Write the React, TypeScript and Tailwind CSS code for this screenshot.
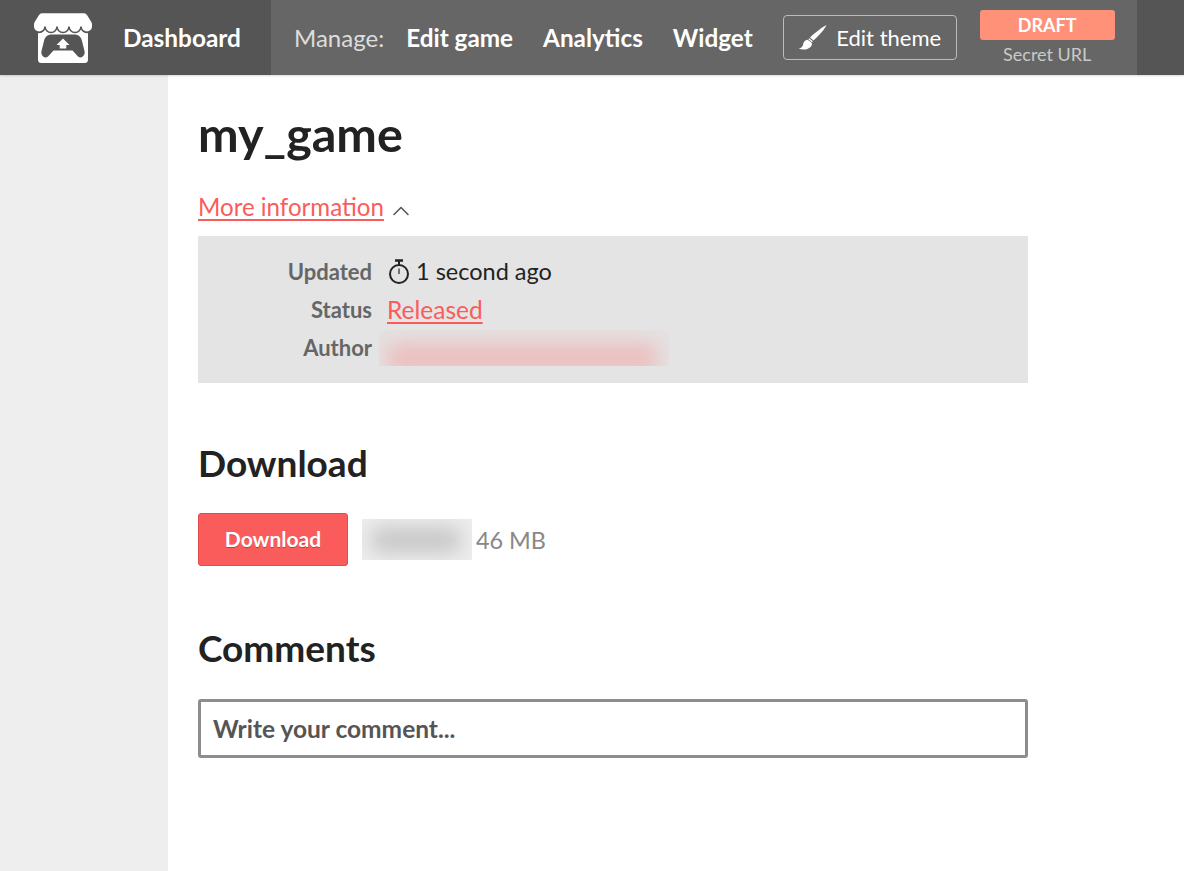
import { ChevronUp } from "lucide-react";

const font = "font-['Lato','Liberation_Sans',sans-serif]";

function Logo() {
  return (
    <svg width="60" height="52" viewBox="0 0 60 52" className="block">
      {/* body */}
      <path fill="#fff" d="M5 14H55V47.500A3.500 3.500 0 0 1 51.500 51H8.500A3.500 3.500 0 0 1 5 47.500Z" />
      {/* awning, its dark outline cuts the scallops out of the body */}
      <path
        fill="#fff"
        stroke="#555"
        strokeWidth="1.600"
        d="M9 0.500H51C53 0.500 54 1.500 55 3L59 9.500C59.500 10.500 59.800 11.500 59.800 12.500V14.500A5.900 5.900 0 0 1 48 14.500 6 6 0 0 1 36 14.500 6 6 0 0 1 24 14.500 6 6 0 0 1 12 14.500 5.900 5.900 0 0 1 0.200 14.500V12.500C0.200 11.500 0.500 10.500 1 9.500L5 3C6 1.500 7 0.500 9 0.500Z"
      />
      {/* gamepad */}
      <path
        fill="#555"
        d="M19 22.500H41C46 22.500 48 25 49 29L51.500 39C52.500 44 48 47 45 44.500L39.500 38.500H20.500L15 44.500C12 47 7.500 44 8.500 39L11 29C12 25 14 22.500 19 22.500Z"
      />
      {/* upload arrow */}
      <path d="M30 26.500L36.500 33H33.300V36.500H26.700V33H23.500Z" fill="#fff" />
    </svg>
  );
}

function BrushIcon() {
  return (
    <svg width="29" height="25" viewBox="0 0 29 25" className="block">
      <path d="M28.500 0C27.500 3 22 9.500 15.500 15.500L12 12.500C17 7.500 24.500 2 28.500 0Z" fill="#fff" />
      <path d="M11.200 13.200L14.800 16.300 14 17.200 10.300 14.200Z" fill="#fff" />
      <path d="M9.600 14.800C6 15.500 5.500 18 5 20 4.500 22 2.500 23.300 0.500 23.500 5 25.500 10.500 24.700 13 21.500 14 20 14.200 18.800 13.600 17.800Z" fill="#fff" />
    </svg>
  );
}

function StopwatchIcon() {
  return (
    <svg width="24" height="26" viewBox="0 0 24 26" fill="none" stroke="#222" strokeWidth="2" className="block">
      <path d="M8 1.500H16" strokeWidth="2.500" />
      <path d="M12 2V6" />
      <circle cx="12" cy="15" r="9" />
      <path d="M12 9.500V15" strokeWidth="1.200" />
    </svg>
  );
}

function NavLink({ label }: { label: string }) {
  return <span className="text-[24.3px] font-bold text-white leading-none">{label}</span>;
}

function InfoRow({ label, children }: { label: string; children?: React.ReactNode }) {
  return (
    <div className="flex items-center h-[38px]">
      <span className="w-[174px] text-right text-[22px] font-bold text-[#666] leading-none">{label}</span>
      <div className="ml-[15px] flex items-center text-[23.500px] text-[#222] leading-none">{children}</div>
    </div>
  );
}

export default function App() {
  return (
    <div className={`${font} min-h-[871px] h-[871px] overflow-hidden bg-white flex flex-col`}>
      {/* Top bar */}
      <header className="h-[75px] shrink-0 flex bg-[#555] shadow-[0_1px_2px_rgba(0,0,0,0.15)] z-10">
        <div className="w-[271px] flex items-center pl-[33px]">
          <Logo />
          <span className="ml-[30px] pt-[2px] text-[24.400px] font-bold text-white leading-none">Dashboard</span>
        </div>
        <div className="w-[866px] bg-[#666] flex items-center pl-[23px]">
          <span className="text-[24px] text-[#ddd] leading-none">Manage:</span>
          <div className="ml-[22px] pt-[2px] flex items-center gap-[30px]">
            <NavLink label="Edit game" />
            <NavLink label="Analytics" />
            <NavLink label="Widget" />
          </div>
          <div className="ml-[30px] w-[174px] h-[45px] flex items-center justify-center gap-[9px] rounded-[4px] border border-[#bbb]">
            <BrushIcon />
            <span className="text-[22px] text-white leading-none">Edit theme</span>
          </div>
          <div className="ml-[23px] w-[135px] -mt-[3px] flex flex-col items-center">
            <div className="w-full h-[30px] flex items-center justify-center rounded-[3px] bg-[#ff9178] text-[18px] font-bold text-white leading-none">
              DRAFT
            </div>
            <span className="mt-[5px] text-[18px] text-[#c9c9c9] leading-none">Secret URL</span>
          </div>
        </div>
      </header>

      <div className="flex-1 flex">
        <aside className="w-[168px] bg-[#eee]" />
        <main className="flex-1 pl-[30px]">
          <h1 className="mt-[29px] text-[48.500px] font-bold text-[#222] leading-[58px]">my_game</h1>

          <div className="mt-[31px] flex items-center h-[29px]">
            <span className="text-[24.100px] text-[#fa5c5c] underline underline-offset-[3px] leading-none">More information</span>
            <ChevronUp size={28} strokeWidth={1.300} className="ml-[3px] mt-[5px] -mb-[2px] text-[#555]" />
          </div>

          <div className="mt-[14px] w-[830px] h-[147px] bg-[#e4e4e4] pt-[17px]">
            <InfoRow label="Updated">
              <StopwatchIcon />
              <span className="ml-[5px]">1 second ago</span>
            </InfoRow>
            <InfoRow label="Status">
              <span className="text-[24.500px] text-[#fa5c5c] underline underline-offset-[3px]">Released</span>
            </InfoRow>
            <InfoRow label="Author">
              <div className="-ml-[8px] w-[290px] h-[36px] overflow-hidden bg-[#e5e2e2]">
                <div className="mt-[14px] ml-[8px] w-[270px] h-[28px] bg-[#ecbcbc] blur-[10px]" />
              </div>
            </InfoRow>
          </div>

          <h2 className="mt-[58px] text-[37px] font-bold text-[#222] leading-[44px]">Download</h2>

          <div className="mt-[28px] flex items-center">
            <div className="w-[150px] h-[53px] pb-[2px] flex items-center justify-center rounded-[3px] border border-[#e04b4b] bg-[#fa5c5c] text-[21px] font-bold text-white leading-none [text-shadow:0_1px_0_rgba(0,0,0,0.3)]">
              Download
            </div>
            <div className="ml-[14px] w-[110px] h-[41px] overflow-hidden bg-[#eee]">
              <div className="mt-[8px] ml-[10px] w-[88px] h-[26px] bg-[#c6c6c6] blur-[10px]" />
            </div>
            <span className="ml-[4px] pt-[2px] text-[23.400px] text-[#888] leading-none">46 MB</span>
          </div>

          <h2 className="mt-[60px] text-[37px] font-bold text-[#222] leading-[44px]">Comments</h2>

          <div className="mt-[29px] w-[830px] h-[59px] pt-[2px] flex items-center rounded-[3px] border-[3px] border-[#8d8d8d] pl-[12px] text-[24.500px] font-bold text-[#555] leading-none">
            Write your comment...
          </div>
        </main>
      </div>
    </div>
  );
}
